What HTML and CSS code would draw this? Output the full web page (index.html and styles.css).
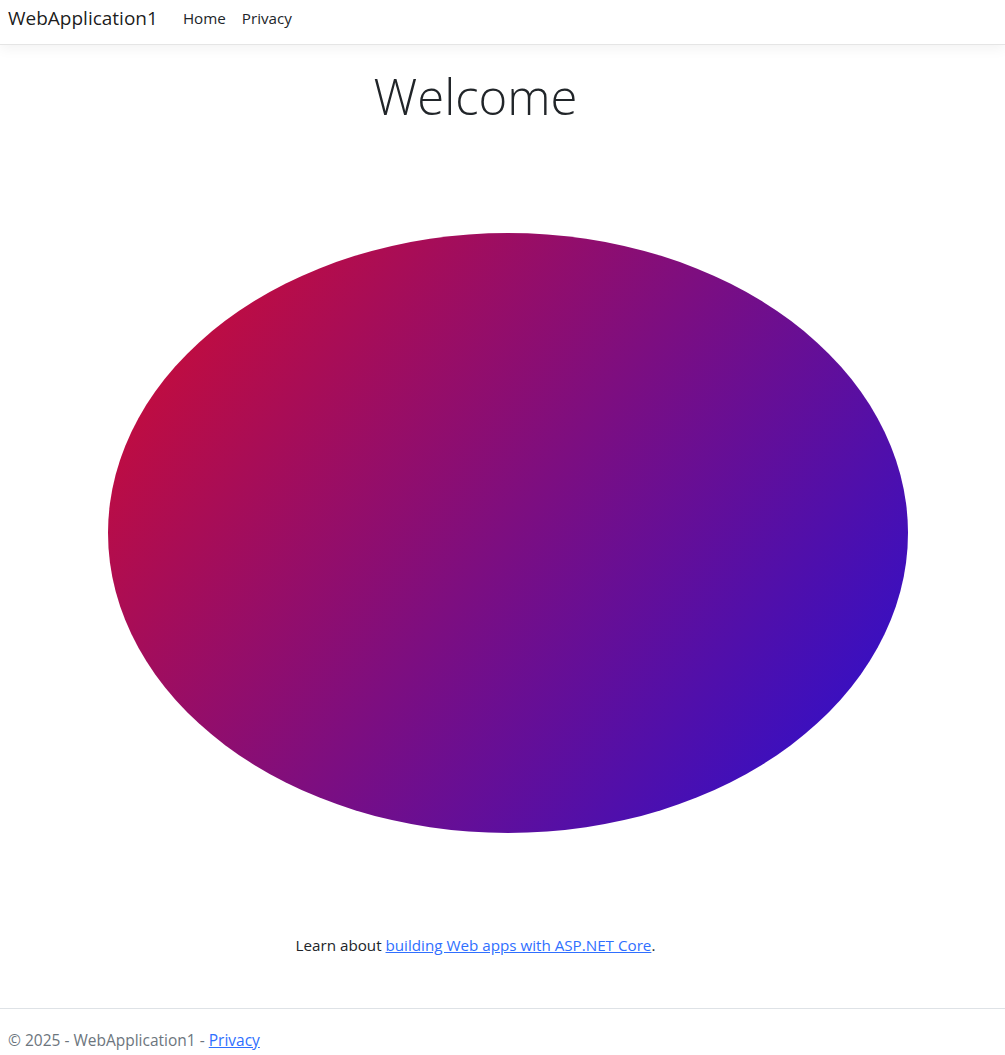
FILE: index.html
```html
<!DOCTYPE html>
<html lang="en">
<head>
<meta charset="utf-8">
<title>Home Page - WebApplication1</title>
<link rel="stylesheet" href="styles.css">
</head>
<body>
<header class="navbar">
  <a class="brand" href="#">WebApplication1</a>
  <nav class="nav">
    <a class="nav-link" href="#">Home</a>
    <a class="nav-link" href="#">Privacy</a>
  </nav>
</header>
<main class="main">
  <h1 class="display">Welcome</h1>
  <div class="shape-wrap">
    <svg class="shape" width="800" height="600" viewBox="0 0 800 600">
      <defs>
        <linearGradient id="g" gradientUnits="userSpaceOnUse" x1="0" y1="0" x2="800" y2="600">
          <stop offset="0" stop-color="#d50c2c"/>
          <stop offset="1" stop-color="#2410d5"/>
        </linearGradient>
      </defs>
      <ellipse cx="400" cy="300" rx="400" ry="300" fill="url(#g)"/>
    </svg>
  </div>
  <p class="learn">Learn about <a href="#">building Web apps with ASP.NET Core</a>.</p>
</main>
<footer class="footer">
  &copy; 2025 - WebApplication1 - <a href="#">Privacy</a>
</footer>
</body>
</html>
```
FILE: styles.css
```css
html, body {
  margin: 0;
  padding: 0;
}
body {
  font-family: "Open Sans", "Noto Sans", sans-serif;
  font-size: 16px;
  color: #212529;
  background: #fff;
}
a {
  color: #2f6fff;
}
.navbar {
  display: flex;
  align-items: center;
  height: 36px;
  padding: 0 8px 8px;
  border-bottom: 1px solid #e5e5e5;
  box-shadow: 0 4px 12px rgba(0, 0, 0, 0.05);
}
.brand {
  font-size: 19px;
  color: rgba(0, 0, 0, 0.9);
  text-decoration: none;
  margin-right: 25px;
}
.nav {
  display: flex;
  gap: 16px;
}
.nav-link {
  color: #212529;
  text-decoration: none;
  font-size: 15.2px;
}
.main {
  width: 951px;
  text-align: center;
}
.display {
  font-size: 49px;
  font-weight: 300;
  margin: 22px 0 0;
  line-height: 1.2;
}
.shape-wrap {
  text-align: left;
  padding-left: 108px;
  margin-top: 107px;
  height: 600px;
}
.shape {
  display: block;
}
.learn {
  margin: 100px 0 0;
  line-height: 24px;
  font-size: 15.2px;
}
.footer {
  margin-top: 51px;
  border-top: 1px solid #dee2e6;
  padding: 19px 8px 20px;
  color: #6c757d;
  line-height: 24px;
  font-size: 15.5px;
}
.footer a {
  color: #2f6fff;
}
```
